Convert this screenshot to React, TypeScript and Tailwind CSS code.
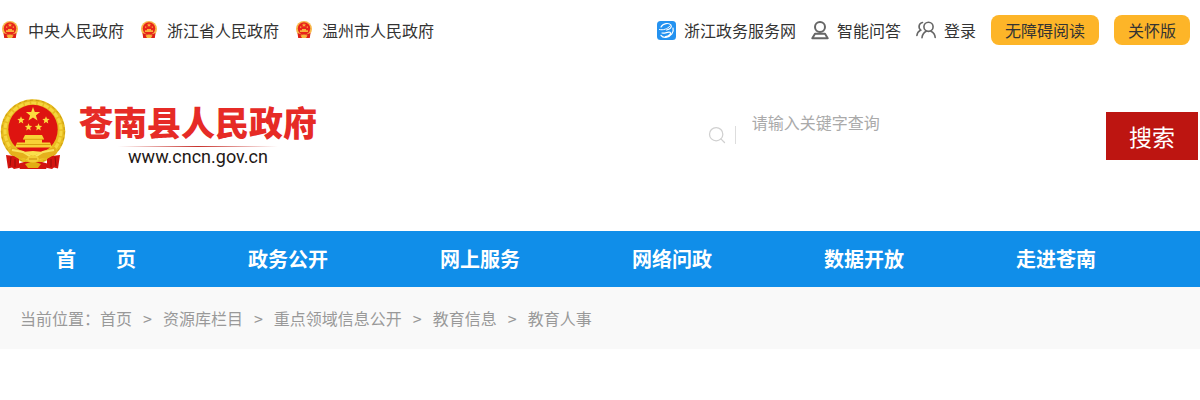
import { Search } from 'lucide-react';

const governments = ['中央人民政府', '浙江省人民政府', '温州市人民政府'];
const navItems = ['首\u3000\u3000页', '政务公开', '网上服务', '网络问政', '数据开放', '走进苍南'];
const crumbs = ['首页', '资源库栏目', '重点领域信息公开', '教育信息', '教育人事'];

function SmallEmblem() {
  return (
    <svg className="h-[18px] w-4 shrink-0" viewBox="0 0 16 18" aria-hidden="true">
      <circle cx="8" cy="8" r="8" fill="#f7b84a" />
      <circle cx="8" cy="7.500" r="6.200" fill="#e8241a" />
      <path d="M1.500 12l4 1.500h5l4-1.500-.7 5H2.200z" fill="#dd1f18" />
      <path d="M8 2l.6 1.400h1.500L9 4.400l.4 1.400L8 5l-1.400.8.400-1.400-1.100-1h1.500z" fill="#f9b13b" />
      <path d="M4 5.500h1.300v1.200H4zM10.700 5.500H12v1.200h-1.300zM6 8h4v1.300h2v1.600H4V9.300h2z" fill="#f9b13b" />
      <path d="M4.500 14.500L8 13.500l3.500 1L10 17H6z" fill="#f7b53c" />
    </svg>
  );
}

function Emblem() {
  return (
    <svg className="h-[72px] w-[67px] shrink-0" viewBox="0 0 67 72" role="img" aria-label="国徽">
      {/* wheat ring */}
      <circle cx="33" cy="33.500" r="32.300" fill="#e8bd20" />
      <circle cx="33" cy="33" r="28" fill="none" stroke="#f6d63f" strokeWidth="3" strokeDasharray="5 1.500" />
      <circle cx="33" cy="33.500" r="31.300" fill="none" stroke="#c99b12" strokeWidth="1" strokeDasharray="3 3" />
      <circle cx="33" cy="31.500" r="24.700" fill="#de1410" />
      {/* stars */}
      <g fill="#fcdc3f">
        <path d="M33 9l1.800 5 5.300.1-4.200 3.300 1.600 5.200-4.500-3.100-4.500 3.100 1.600-5.200-4.200-3.300 5.300-.1z" />
        <path id="star" d="M21 18.300l1 2.500 2.700.2-2.100 1.700.7 2.700-2.300-1.500-2.300 1.500.7-2.700-2.100-1.700 2.700-.2z" />
        <use href="#star" x="25" />
        <use href="#star" x="7.500" y="7" />
        <use href="#star" x="17.500" y="7" />
      </g>
      {/* Tiananmen gate */}
      <path d="M25 37h17l2 4h-2v3.500h8l2 5H15l2-5h8V41h-2z" fill="#f8d236" />
      <path d="M23 41.300h21M16 46.500h35" stroke="#d9a00f" strokeWidth="1" />
      {/* ribbons */}
      <path d="M6 57l8 1 5 3v9l-5 1-2-1.500-4 1zM60 57l-8 1-5 3v9l5 1 2-1.500 4 1z" fill="#d3140f" />
      <path d="M11 59l-1 9M15 61v8M55 59l1 9M51 61v8" stroke="#960e0a" strokeWidth="1" />
      <path d="M17 66l7-2h18l7 2-3 5H20z" fill="#d3140f" />
      {/* gear and knot */}
      <path d="M11 49l12 4 10 5 10-5 12-4 2 6-9 5-9 1-6 3-6-3-9-1-9-5z" fill="#e5b01c" />
      <path d="M12 52l11 2 10 6 10-6 11-2" fill="none" stroke="#fae25c" strokeWidth="2" />
      <path d="M22 54l11-1 11 1-11 4z" fill="#fae04c" />
      <path d="M25 66l8-3 8 3-3 4H28z" fill="#e3ad13" />
      <ellipse cx="33" cy="61" rx="6" ry="3.500" fill="#f4ce35" />
      <path d="M29 61h8" stroke="#c8860a" strokeWidth="1" />
    </svg>
  );
}

function ServiceIcon() {
  return (
    <svg className="h-[19px] w-[19px]" viewBox="0 0 19 19" aria-hidden="true">
      <rect width="19" height="19" rx="3.500" fill="#2492f0" />
      <g fill="none" stroke="#fff" strokeLinecap="round">
        <path d="M4 6C6 2 12 1.500 14 4.200c1.200 2-1 4-4.500 4.800" strokeWidth="1.200" />
        <path d="M2.500 8.500c3.500 1 8-.5 10.500-3.500" strokeWidth="1" />
        <path d="M5 12c3 .8 6-1.700 8-.7 1.700 1.200-1 3.700-4.500 4.400M16 7c1.200 4-2 8.500-7 9.300-2 .3-4-.5-5-2" strokeWidth="1.200" />
      </g>
    </svg>
  );
}

function RobotIcon() {
  return (
    <svg className="h-[19px] w-[18px]" viewBox="0 0 18 19" fill="none" stroke="#666" strokeWidth="2" aria-hidden="true">
      <circle cx="9" cy="6" r="5" />
      <path d="M4 12.800h10l2.700 4.400H1.300z" strokeLinejoin="round" />
    </svg>
  );
}

function UsersIcon() {
  return (
    <svg className="h-[18px] w-5" viewBox="0 0 20 18" fill="none" stroke="#666" strokeWidth="1.600" strokeLinecap="round" aria-hidden="true">
      <circle cx="12.500" cy="5.800" r="4.600" />
      <path d="M15 10.300c2.500 1.200 4 3.500 4.200 6.200M10.200 10.300C8 11.500 6.300 13.500 6 16.800" />
      <path d="M6.500 1.500C3 2 1.800 6.500 4.700 9 2.500 10.200 1.200 12 .9 14.500" />
    </svg>
  );
}

export default function App() {
  return (
    <div lang="zh-CN" className="bg-white font-['Noto_Sans_CJK_SC',sans-serif] text-base text-[#333]">
      {/* Top links */}
      <div className="flex h-15 items-center justify-between pr-[10px] pl-[2px] whitespace-nowrap">
        <ul className="flex gap-[17px]">
          {governments.map((name) => (
            <li key={name}>
              <a href="#" className="flex items-center gap-[10px]">
                <SmallEmblem />
                {name}
              </a>
            </li>
          ))}
        </ul>

        <div className="flex items-center gap-[15px]">
          <a href="#" className="flex items-center gap-2">
            <ServiceIcon />
            浙江政务服务网
          </a>
          <a href="#" className="flex items-center gap-2">
            <RobotIcon />
            智能问答
          </a>
          <a href="#" className="flex items-center gap-2">
            <UsersIcon />
            登录
          </a>
          <button type="button" className="h-[30px] rounded-lg bg-[#fdb528] px-[14px]">
            无障碍阅读
          </button>
          <button type="button" className="h-[30px] rounded-lg bg-[#fdb528] px-[14px]">
            关怀版
          </button>
        </div>
      </div>

      {/* Logo and search */}
      <header className="flex items-start justify-between pt-[38px] pr-[2px] pb-[61px]">
        <a href="#" className="flex gap-3">
          <Emblem />
          <span className="flex flex-col items-center pt-1">
            <span className="text-[34px] leading-10 font-black text-[#e62b26]">苍南县人民政府</span>
            <span className="mt-1 h-px w-40 bg-linear-to-r from-transparent via-[#c8322d] to-transparent" />
            <span className="font-[Roboto,sans-serif] text-lg leading-5 text-[#231815]">www.cncn.gov.cn</span>
          </span>
        </a>

        <form className="mt-[14px] flex h-12 w-[41%]" onSubmit={(e) => e.preventDefault()}>
          <label htmlFor="keyword" aria-label="关键字" className="flex h-[46px] items-center gap-2">
            <Search className="h-5 w-5 text-[#d0d0d0]" strokeWidth={1.5} />
            <span className="h-[18px] w-px bg-[#ddd]" />
          </label>
          <input
            id="keyword"
            type="text"
            placeholder="请输入关键字查询"
            className="ml-4 h-5 min-w-0 flex-1 outline-none placeholder:text-[#aaa]"
          />
          <button type="submit" className="h-12 w-[92px] bg-[#bd1511] text-[23px] text-white">
            搜索
          </button>
        </form>
      </header>

      <nav className="bg-[#108ee9]">
        <ul className="flex h-14 items-center text-xl font-bold text-white">
          {navItems.map((item) => (
            <li key={item} className="w-[16%] text-center">
              <a href="#">{item}</a>
            </li>
          ))}
        </ul>
      </nav>

      {/* Breadcrumb */}
      <div className="flex h-[62px] items-center bg-[#f9f9f9] px-5 text-[#999]">
        <span>当前位置：</span>
        <ol className="flex gap-[11px]">
          {crumbs.map((crumb, i) => (
            <li key={crumb} className="flex gap-[11px]">
              {i > 0 && <span>&gt;</span>}
              <a href="#">{crumb}</a>
            </li>
          ))}
        </ol>
      </div>
    </div>
  );
}
